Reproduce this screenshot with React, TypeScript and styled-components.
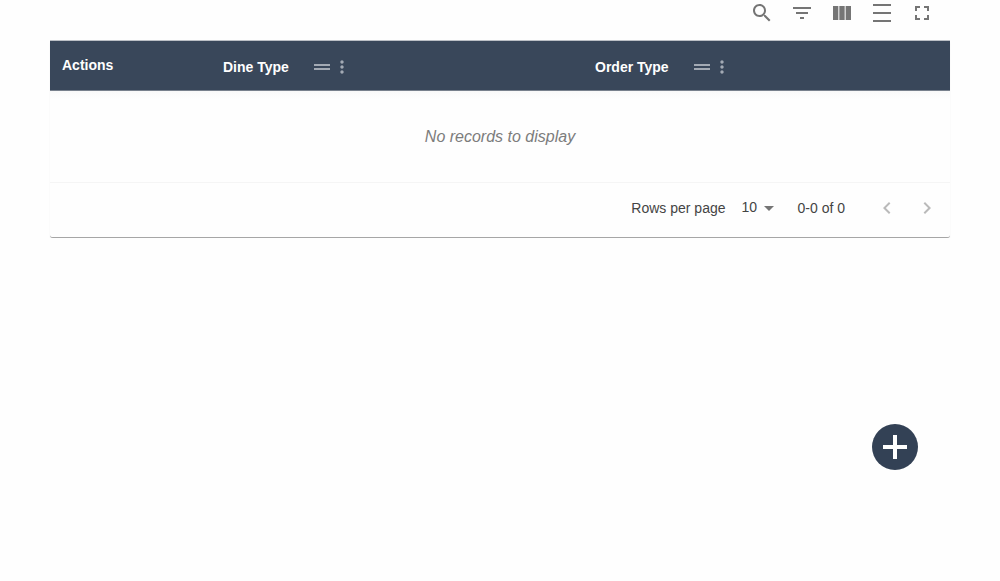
import React from "react";
import styled, { createGlobalStyle } from "styled-components";

const GlobalStyle = createGlobalStyle`
  *, *::before, *::after { box-sizing: border-box; }
  body {
    margin: 0;
    background: #fefefe;
    color: #212121;
    font-family: "Liberation Sans", Arial, sans-serif;
    font-size: 14px;
    line-height: 20px;
  }
`;

const Page = styled.main`
  padding: 0 50px;
`;

const Toolbar = styled.div`
  display: flex;
  justify-content: flex-end;
  padding: 1px 8px 15px 0;
`;

const IconButton = styled.button<{ $width?: number }>`
  display: flex;
  align-items: center;
  justify-content: center;
  width: ${({ $width }) => $width ?? 40}px;
  height: 24px;
  padding: 0;
  border: 0;
  background: none;
  color: #757575;
  cursor: pointer;

  &:disabled {
    color: #bababa;
    cursor: default;
  }
`;

const Icon = styled.svg`
  display: block;
  flex: none;
  fill: currentColor;
`;

const Card = styled.section`
  background: #fefefe;
  border-bottom: 1px solid #a6a6a6;
  border-radius: 0 0 3px 3px;
  box-shadow: 0 2px 2px -1px rgba(0, 0, 0, 0.25);
`;

const Table = styled.table`
  width: 100%;
  table-layout: fixed;
  border-collapse: separate;
  border-spacing: 0;
`;

const HeadRow = styled.tr`
  background: #39475a;
`;

const HeadCell = styled.th<{ $width?: number }>`
  width: ${({ $width }) => ($width ? `${$width}px` : "auto")};
  height: 51px;
  padding: 14px 12px 0;
  border-top: 1px solid #bcc0c6;
  border-bottom: 1px solid #78818d;
  color: #fff;
  text-align: left;
  vertical-align: top;
`;

const HeadContent = styled.div`
  display: flex;
  align-items: center;
  height: 24px;
`;

const HeadActions = styled.div`
  display: flex;
  margin-left: 23px;

  ${IconButton} {
    color: #a3aab4;
  }
`;

const EmptyCell = styled.td`
  height: 92px;
  padding: 0;
  border-bottom: 1px solid #f5f5f5;
  background: linear-gradient(#f9f9f9, #fefefe 8px);
  color: #7c7c7c;
  font-size: 16px;
  font-style: italic;
  text-align: center;
`;

const Pagination = styled.footer`
  display: flex;
  align-items: center;
  justify-content: flex-end;
  height: 54px;
  padding: 0 3px 4px 0;
  color: #444;
`;

const SelectWrap = styled.span`
  position: relative;
  display: flex;
  align-items: center;
  margin: 0 20px 0 16px;
`;

const RowsSelect = styled.select`
  appearance: none;
  width: 36px;
  height: 22px;
  padding: 0 20px 2px 0;
  border: 0;
  background: none;
  color: inherit;
  font: inherit;
  cursor: pointer;
`;

const SelectArrow = styled(Icon)`
  position: absolute;
  right: -3px;
  color: #757575;
  pointer-events: none;
`;

const PageButtons = styled.div`
  display: flex;
  margin-left: 22px;
`;

const AddButton = styled.button`
  position: fixed;
  right: 82px;
  bottom: 111px;
  display: flex;
  align-items: center;
  justify-content: center;
  width: 46px;
  height: 46px;
  padding: 0;
  border: 0;
  border-radius: 50%;
  background: #334155;
  color: #fff;
  cursor: pointer;
`;

const tools = [
  {
    label: "Show/Hide search",
    path: "M15.5 14h-.79l-.28-.27C15.41 12.59 16 11.11 16 9.5 16 5.91 13.09 3 9.5 3S3 5.91 3 9.5 5.91 16 9.5 16c1.61 0 3.09-.59 4.23-1.57l.27.28v.79l5 4.99L20.49 19l-4.99-5zm-6 0C7.01 14 5 11.99 5 9.5S7.01 5 9.5 5 14 7.01 14 9.5 11.99 14 9.5 14z",
  },
  { label: "Show/Hide filters", path: "M10 18h4v-2h-4v2zM3 6v2h18V6H3zm3 7h12v-2H6v2z" },
  {
    label: "Show/Hide columns",
    path: "M14.67 5v14H9.33V5h5.34zm1 14H21V5h-5.33v14zm-7.34 0V5H3v14h5.33z",
  },
  { label: "Toggle density", path: "M3 3h18v2H3zm0 16h18v2H3zm0-8h18v2H3z" },
  {
    label: "Toggle full screen",
    path: "M7 14H5v5h5v-2H7v-3zm-2-4h2V7h3V5H5v5zm12 7h-3v2h5v-5h-2v3zM14 5v2h3v3h2V5h-5z",
  },
];

function Glyph({ path }: { path: string }) {
  return (
    <Icon width="24" height="24" viewBox="0 0 24 24" aria-hidden="true">
      <path d={path} />
    </Icon>
  );
}

function ColumnHeader({ title, width }: { title: string; width?: number }) {
  return (
    <HeadCell scope="col" $width={width}>
      <HeadContent>
        {title}
        <HeadActions>
          <IconButton $width={20} type="button" aria-label={`Move ${title}`}>
            <Icon width="20" height="24" viewBox="2 0 20 24" aria-hidden="true">
              <path d="M20 9H4v2h16V9zM4 15h16v-2H4v2z" />
            </Icon>
          </IconButton>
          <IconButton $width={20} type="button" aria-label={`${title} column actions`}>
            <Icon width="20" height="20" viewBox="0 0 24 24" aria-hidden="true">
              <path d="M12 8c1.1 0 2-.9 2-2s-.9-2-2-2-2 .9-2 2 .9 2 2 2zm0 2c-1.1 0-2 .9-2 2s.9 2 2 2 2-.9 2-2-.9-2-2-2zm0 6c-1.1 0-2 .9-2 2s.9 2 2 2 2-.9 2-2-.9-2-2-2z" />
            </Icon>
          </IconButton>
        </HeadActions>
      </HeadContent>
    </HeadCell>
  );
}

export default function App() {
  return (
    <Page>
      <GlobalStyle />
      <Toolbar>
        {tools.map((tool) => (
          <IconButton key={tool.label} type="button" aria-label={tool.label}>
            <Glyph path={tool.path} />
          </IconButton>
        ))}
      </Toolbar>
      <Card>
        <Table>
          <thead>
            <HeadRow>
              <HeadCell scope="col" $width={161}>
                Actions
              </HeadCell>
              <ColumnHeader title="Dine Type" width={372} />
              <ColumnHeader title="Order Type" />
            </HeadRow>
          </thead>
          <tbody>
            <tr>
              <EmptyCell colSpan={3}>No records to display</EmptyCell>
            </tr>
          </tbody>
        </Table>
        <Pagination>
          <label htmlFor="rows-per-page">Rows per page</label>
          <SelectWrap>
            <RowsSelect id="rows-per-page" defaultValue="10">
              <option>5</option>
              <option>10</option>
              <option>25</option>
              <option>50</option>
            </RowsSelect>
            <SelectArrow width="24" height="24" viewBox="0 0 24 24" aria-hidden="true">
              <path d="M7 10l5 5 5-5z" />
            </SelectArrow>
          </SelectWrap>
          <span>0-0 of 0</span>
          <PageButtons>
            <IconButton type="button" disabled aria-label="Previous page">
              <Glyph path="M15.41 7.41 14 6l-6 6 6 6 1.41-1.41L10.83 12z" />
            </IconButton>
            <IconButton type="button" disabled aria-label="Next page">
              <Glyph path="M10 6 8.59 7.41 13.17 12l-4.58 4.59L10 18l6-6z" />
            </IconButton>
          </PageButtons>
        </Pagination>
      </Card>
      <AddButton type="button" aria-label="Add">
        <Icon width="24" height="24" viewBox="0 0 24 24" aria-hidden="true">
          <path d="M10 0h4v10h10v4H14v10h-4V14H0v-4h10z" />
        </Icon>
      </AddButton>
    </Page>
  );
}
